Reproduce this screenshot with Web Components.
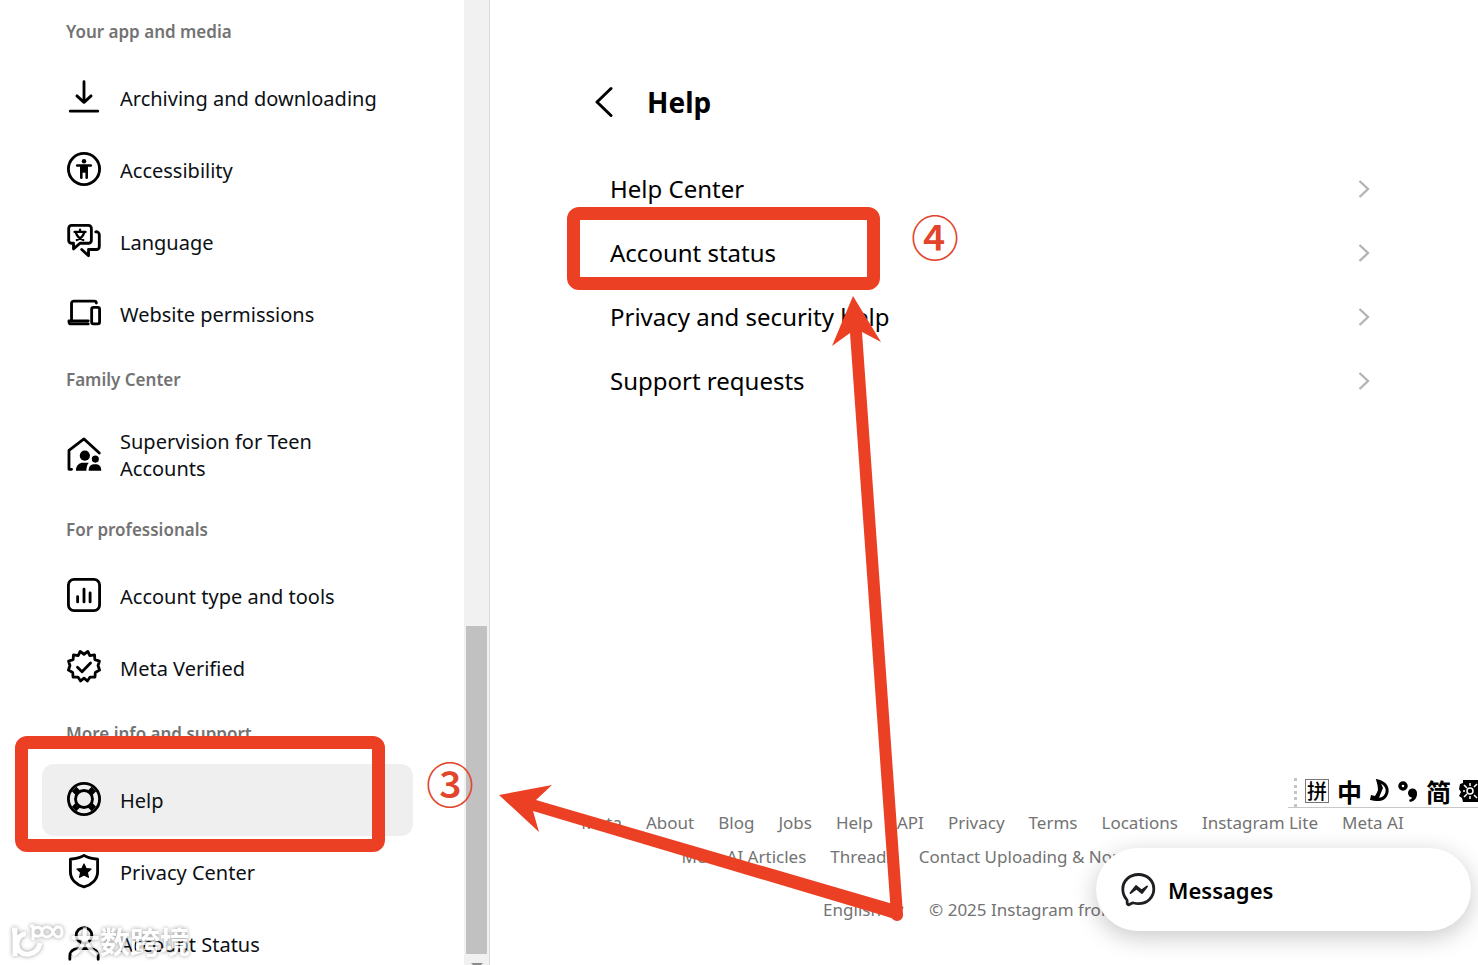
<!DOCTYPE html>
<html lang="en">
<head>
<meta charset="utf-8">
<title>Help</title>
<style>
  body {
    margin: 0;
    background: #fff;
    color: #0c1014;
    font-family: "Noto Sans", "Open Sans", "Noto Sans CJK SC", sans-serif;
  }
</style>
</head>
<body>
<settings-page></settings-page>

<script>
const icons = {
  download: '<path d="M12 1.200v14.200M7 11.200l5 4.600 5-4.600M2.300 22h19.400"/>',
  access: '<circle cx="12" cy="12" r="11"/><circle cx="12" cy="6.600" r="1.600" fill="currentColor" stroke="none"/><path d="M7.200 9.500h9.600M10.100 9.600v8.600M13.900 9.600v8.600" stroke-width="1.800"/><path d="M9.500 9.400h5v5.200h-5z" fill="currentColor" stroke="none"/>',
  language: '<path d="M3.200 1h12a2 2 0 0 1 2 2v8.600a2 2 0 0 1-2 2H9.200l-4.600 4v-4H3.200a2 2 0 0 1-2-2V3a2 2 0 0 1 2-2z"/><path d="M20.300 5.500a2.200 2.200 0 0 1 2.500 2.200v8.300a2 2 0 0 1-2 2h-5.600v4.400l-4.800-4.400"/><path d="M5.300 5.600h7.800M9.200 3.900v1.700M12.200 5.900c-.8 2.700-2.700 4.500-5.300 5.400M6.200 5.900c.8 2.700 2.700 4.500 5.300 5.400" stroke-width="1.600"/>',
  devices: '<path d="M3.200 17.500V5.200A1.600 1.600 0 0 1 4.800 3.600h14.500a1.400 1.400 0 0 1 1.400 1.400M15 17.500H1.400v.6a1.600 1.600 0 0 0 1.600 1.600h12"/><rect x="17.400" y="8" width="5.600" height="11.700" rx="1.300"/>',
  family: '<path d="M3.200 22.800H1.400V9.500L12 1.400l10.800 9.900"/><g fill="currentColor" stroke="none"><circle cx="12.600" cy="13.200" r="3.600"/><circle cx="20" cy="15.600" r="2.500"/><path d="M6.300 23.800c0-3.800 2.400-5.600 5.200-5.600H15.400c-1.200 1.400-1.700 3.200-1.700 5.600zM15.300 23.800c0-3.200 1.700-4.500 4.500-4.500s4.400 1.300 4.400 4.500z"/></g>',
  chart: '<rect x="1" y="1" width="22" height="22" rx="4"/><path d="M7.500 13.200v3.700M12 7.800v9.100M16.300 10.500v6.400"/>',
  verified: '<path d="M12 3 14.700 1l1.400 3 3.300-.6.300 3.400 3.200 1-1 3.200 1.100 3.200-3 1.600-.300 3.400-3.400-.100-1.900 2.800-2.400-2-2.400 2-1.900-2.800-3.400.100-.300-3.400-3-1.600 1.100-3.200-1-3.200 3.200-1 .3-3.400 3.300.6 1.400-3z"/><path d="m7.400 12.200 3.200 3.100 6-6.100"/>',
  help: '<circle cx="12" cy="12" r="11"/><circle cx="12" cy="12" r="6"/><path d="m5 5 2.800 2.800M19 5l-2.800 2.800M5 19l2.800-2.800M19 19l-2.800-2.800" stroke-width="4.500" stroke-linecap="butt"/>',
  shield: '<path d="M12 1c2.900 1.900 6 2.400 9.600 2.700v9c0 5.200-4.200 9-9.600 10.500-5.400-1.500-9.600-5.300-9.600-10.500v-9C6 3.400 9.100 2.900 12 1z"/><path d="m12 7 1.500 3.200 3.500.4-2.600 2.400.7 3.500-3.100-1.700-3.100 1.700.7-3.500L7 10.600l3.500-.4z" fill="currentColor" stroke-width=".8"/>',
  person: '<circle cx="12" cy="6.600" r="5.500"/><path d="M2 23.500v-2.200c0-3 2.300-5.300 5.300-5.300h9.400c3 0 5.300 2.300 5.300 5.300v2.200"/>'
}

class SideItem extends HTMLElement {
  constructor () {
    super()
    this.attachShadow({ mode: 'open' })
  }

  connectedCallback () {
    this.shadowRoot.innerHTML =
    /* html */`
    <style>
      :host {
        display: block;
      }

      a {
        align-items: center;
        border-radius: 12px;
        box-sizing: border-box;
        color: inherit;
        display: flex;
        font-size: 20px;
        gap: 18px;
        line-height: 27px;
        min-height: 72px;
        padding: 18px 24px;
        text-decoration: none;
      }

      :host([active]) a {
        background: #efefef;
      }

      svg {
        color: #000;
        flex: none;
        height: 34px;
        overflow: visible;
        padding: 0 1px 2px;
        width: 34px;
      }

      span {
        max-width: 260px;
      }
    </style>
    <a href="#">
      <svg viewBox="0 0 24 24" fill="none" stroke="currentColor" stroke-width="2" stroke-linecap="round" stroke-linejoin="round" aria-hidden="true">${icons[this.getAttribute('icon')]}</svg>
      <span><slot></slot></span>
    </a>
    `
  }
}
customElements.define('side-item', SideItem)

class SideGroup extends HTMLElement {
  constructor () {
    super()
    this.attachShadow({ mode: 'open' })
  }

  connectedCallback () {
    this.shadowRoot.innerHTML =
    /* html */`
    <style>
      :host {
        display: block;
      }

      h2 {
        color: #737373;
        font-size: 17px;
        font-weight: 600;
        line-height: 60px;
        margin: 0;
        padding: 0 24px;
      }
    </style>
    <h2>${this.getAttribute('heading')}</h2>
    <slot></slot>
    `
  }
}
customElements.define('side-group', SideGroup)

class SideBar extends HTMLElement {
  constructor () {
    super()
    this.attachShadow({ mode: 'open' })
  }

  connectedCallback () {
    this.shadowRoot.innerHTML =
    /* html */`
    <style>
      :host {
        border-right: 1px solid #dbdbdb;
        box-sizing: border-box;
        display: flex;
        flex: none;
        overflow: hidden;
        width: 490px;
      }

      nav {
        flex: 1;
        padding: 2px 51px 0 42px;
      }

      .track {
        background: #f1f1f1;
        box-sizing: border-box;
        display: flex;
        flex-direction: column;
        justify-content: flex-end;
        padding: 0 2px;
        width: 25px;
      }

      .thumb {
        background: #c1c1c1;
        height: 34%;
      }

      .arrow {
        align-self: center;
        border: 6px solid transparent;
        border-bottom: 0;
        border-top-color: #8b8b8b;
        margin: 9px 0 -4px;
      }
    </style>
    <nav>
      <side-group heading="Your app and media">
        <side-item icon="download">Archiving and downloading</side-item>
        <side-item icon="access">Accessibility</side-item>
        <side-item icon="language">Language</side-item>
        <side-item icon="devices">Website permissions</side-item>
      </side-group>
      <side-group heading="Family Center">
        <side-item icon="family">Supervision for Teen Accounts</side-item>
      </side-group>
      <side-group heading="For professionals">
        <side-item icon="chart">Account type and tools</side-item>
        <side-item icon="verified">Meta Verified</side-item>
      </side-group>
      <side-group heading="More info and support">
        <side-item icon="help" active>Help</side-item>
        <side-item icon="shield">Privacy Center</side-item>
        <side-item icon="person">Account Status</side-item>
      </side-group>
    </nav>
    <div class="track"><div class="thumb"></div><div class="arrow"></div></div>
    `
  }
}
customElements.define('side-bar', SideBar)

class HelpRow extends HTMLElement {
  constructor () {
    super()
    this.attachShadow({ mode: 'open' })
  }

  connectedCallback () {
    this.shadowRoot.innerHTML =
    /* html */`
    <style>
      :host {
        display: block;
      }

      a {
        align-items: center;
        color: #000;
        display: flex;
        font-size: 24px;
        height: 64px;
        justify-content: space-between;
        text-decoration: none;
      }

      svg {
        height: 20px;
        width: 12px;
      }
    </style>
    <a href="#">
      <slot></slot>
      <svg viewBox="0 0 12 20" fill="none" stroke="#b4b4b4" stroke-width="2.400" aria-hidden="true"><path d="m1.500 3 8.500 8-8.500 8"/></svg>
    </a>
    `
  }
}
customElements.define('help-row', HelpRow)

class HelpPanel extends HTMLElement {
  constructor () {
    super()
    this.attachShadow({ mode: 'open' })
  }

  connectedCallback () {
    this.shadowRoot.innerHTML =
    /* html */`
    <style>
      :host {
        display: block;
        padding: 78px 108px 0 105px;
      }

      header {
        align-items: center;
        display: flex;
        gap: 34px;
        height: 48px;
      }

      button {
        background: none;
        border: none;
        display: flex;
        padding: 0;
      }

      button svg {
        height: 32px;
        width: 18px;
      }

      h1 {
        color: #000;
        font-size: 28px;
        font-weight: 700;
        line-height: 40px;
        margin: 0;
      }

      .rows {
        padding: 30px 0 0 15px;
      }
    </style>
    <header>
      <button type="button" aria-label="Back">
        <svg viewBox="0 0 18 32" fill="none" stroke="#000" stroke-width="3" stroke-linecap="round" stroke-linejoin="round"><path d="M16 2.500 2 16l14 13.500"/></svg>
      </button>
      <h1>Help</h1>
    </header>
    <div class="rows">
      <help-row>Help Center</help-row>
      <help-row>Account status</help-row>
      <help-row>Privacy and security help</help-row>
      <help-row>Support requests</help-row>
    </div>
    `
  }
}
customElements.define('help-panel', HelpPanel)

class PageFooter extends HTMLElement {
  constructor () {
    super()
    this.attachShadow({ mode: 'open' })
  }

  links (names) {
    return names.map(name => `<a href="#">${name}</a>`).join('')
  }

  connectedCallback () {
    this.shadowRoot.innerHTML =
    /* html */`
    <style>
      :host {
        color: #737373;
        display: block;
        font-size: 17px;
        line-height: 24px;
        padding: 0 68px 43px 85px;
      }

      .line {
        display: flex;
        gap: 24px;
        justify-content: center;
        margin-bottom: 10px;
        white-space: nowrap;
      }

      .legal {
        margin: 29px 0 0;
      }

      a {
        color: inherit;
        text-decoration: none;
      }

      label {
        align-items: center;
        display: flex;
        gap: 8px;
      }

      select {
        appearance: none;
        background: none;
        border: none;
        color: inherit;
        font: inherit;
        padding: 0;
      }

      label svg {
        height: 16px;
        width: 16px;
      }
    </style>
    <div class="line">${this.links(['Meta', 'About', 'Blog', 'Jobs', 'Help', 'API', 'Privacy', 'Terms', 'Locations', 'Instagram Lite', 'Meta AI'])}</div>
    <div class="line">${this.links(['Meta AI Articles', 'Threads', 'Contact Uploading &amp; Non-Users', 'Meta Verified'])}</div>
    <div class="line legal">
      <label>
        <select aria-label="Language"><option>English</option></select>
        <svg viewBox="0 0 16 16" fill="none" stroke="currentColor" stroke-width="2" aria-hidden="true"><path d="m2 5 6 6 6-6"/></svg>
      </label>
      <span>© 2025 Instagram from Meta</span>
    </div>
    `
  }
}
customElements.define('page-footer', PageFooter)

class MessagesPill extends HTMLElement {
  constructor () {
    super()
    this.attachShadow({ mode: 'open' })
  }

  connectedCallback () {
    this.shadowRoot.innerHTML =
    /* html */`
    <style>
      :host {
        bottom: 34px;
        position: absolute;
        right: 7px;
      }

      button {
        align-items: center;
        background: #fff;
        border: none;
        border-radius: 42px;
        box-shadow: 0 6px 24px rgba(0, 0, 0, .22);
        color: #000;
        display: flex;
        font: 600 22px/30px "Noto Sans", "Open Sans", sans-serif;
        gap: 12px;
        height: 83px;
        padding: 0 24px;
        width: 375px;
      }

      svg {
        height: 36px;
        width: 36px;
      }
    </style>
    <button type="button">
      <svg viewBox="0 0 36 36" fill="none" stroke="#1c1e21" stroke-width="2.800" stroke-linejoin="round" aria-hidden="true">
        <path d="M18.500 2.500c8.800 0 15.300 6.200 15.300 14.500s-6.500 14.600-15.300 14.600c-1.600 0-3.100-.2-4.500-.6-.6-.2-1.200-.1-1.700.1l-3 1.500c-1 .4-2-.2-2.100-1.200l-.1-2.800c0-.7-.3-1.200-.8-1.600-2.200-2.600-3.500-6.100-3.500-10C2.800 8.700 9.700 2.500 18.500 2.500z"/>
        <path d="m10.500 21 5.500-7 5.500 4.500 5.500-4-5 6.500-5.500-4.500z" fill="#1c1e21" stroke-width="2"/>
      </svg>
      <span>Messages</span>
    </button>
    `
  }
}
customElements.define('messages-pill', MessagesPill)

class ImeBar extends HTMLElement {
  constructor () {
    super()
    this.attachShadow({ mode: 'open' })
  }

  connectedCallback () {
    this.shadowRoot.innerHTML =
    /* html */`
    <style>
      :host {
        align-items: center;
        background: #fff;
        border-bottom: 1px solid #c8c8c8;
        bottom: 157px;
        color: #000;
        display: flex;
        font: 700 25px/30px "Noto Sans CJK SC", sans-serif;
        gap: 8px;
        height: 33px;
        overflow: hidden;
        padding-left: 6px;
        position: absolute;
        right: -1px;
      }

      .grip {
        align-self: stretch;
        border-left: 3px dotted #c4c4c4;
        margin-top: 4px;
      }

      .mode {
        border: 1px solid #777;
        font-size: 20px;
        font-weight: 500;
        line-height: 22px;
        padding: 0 1px;
      }

      svg {
        height: 24px;
        width: 20px;
      }
    </style>
    <span class="grip"></span>
    <span class="mode">拼</span>
    <span>中</span>
    <svg viewBox="0 0 20 24" aria-hidden="true"><path d="M8 2c8 2 11 8 8 14-2 4-7 5-12 4 5-3 7-9 4-18z" fill="none" stroke="#000" stroke-width="3"/><path d="M7 2h3l3 7-3 7-2 6-8-1 1-5 4 1 4-7z"/></svg>
    <svg viewBox="0 0 20 24" aria-hidden="true"><circle cx="5" cy="7" r="3" fill="none" stroke="#000" stroke-width="3.500"/><circle cx="14.500" cy="14" r="4.500"/><path d="M19 14c0 5-2 8-7 9l-1-2c3-1 3-2 3-4z"/></svg>
    <span>简</span>
    <svg viewBox="0 0 20 24" aria-hidden="true"><path d="M4 1h16v22H4l-1-4-3-2 2-4-2-3 1-5 3-1z"/><g fill="none" stroke="#fff" stroke-width="1.500"><circle cx="11" cy="12" r="3"/><path d="m5 6 3 3M5 18l3-3M4 12h2M11 4v3M11 17v3M15 8l3-3M15 16l3 3"/></g></svg>
    `
  }
}
customElements.define('ime-bar', ImeBar)

class MarkUp extends HTMLElement {
  constructor () {
    super()
    this.attachShadow({ mode: 'open' })
  }

  connectedCallback () {
    this.shadowRoot.innerHTML =
    /* html */`
    <style>
      :host {
        color: #e2452c;
        inset: 0;
        overflow: hidden;
        pointer-events: none;
        position: absolute;
      }

      .box {
        border: 13px solid #ec4025;
        border-radius: 12px;
        box-sizing: border-box;
        position: absolute;
      }

      .help {
        height: 116px;
        left: 15px;
        top: 736px;
        width: 370px;
      }

      .status {
        height: 83px;
        left: 567px;
        top: 207px;
        width: 313px;
      }

      .step {
        font: 500 48px/48px "Noto Sans CJK SC", sans-serif;
        position: absolute;
      }

      .three {
        left: 426px;
        top: 758px;
      }

      .four {
        left: 911px;
        top: 211px;
      }

      .arrows {
        height: 965px;
        left: 0;
        position: absolute;
        top: 0;
        width: 1478px;
      }

      .brand {
        align-items: center;
        bottom: 6px;
        color: #fff;
        display: flex;
        filter: drop-shadow(0 0 2px rgba(0, 0, 0, .5));
        font: 700 30px/36px "Noto Sans CJK SC", sans-serif;
        gap: 6px;
        left: 10px;
        opacity: .8;
        position: absolute;
      }

      .brand svg {
        height: 38px;
        width: 54px;
      }
    </style>
    <div class="box help"></div>
    <div class="box status"></div>
    <span class="step three">③</span>
    <span class="step four">④</span>
    <svg class="arrows" viewBox="0 0 1478 965" fill="#ec4025" aria-hidden="true">
      <path d="m853 296 28 46-19-10 41 582a6 6 0 0 1-6 7 6 6 0 0 1-6-6L850 333l-18 13z"/>
      <path d="m499 795 53-10-16 15 357 104 4 16-12-4-352-105 6 21z"/>
    </svg>
    <div class="brand">
      <svg viewBox="0 0 54 38" fill="none" stroke="#fff" aria-hidden="true">
        <path d="M2 9h3v26M16 13c-6 0-9 5-9 10 0 7 5 11 12 10 6-1 10-5 11-11" stroke-width="5"/>
        <path d="M20 5h3v14M23 10c1-5 8-5 9 0 1 6-7 7-9 2M43 11c-3-7-11-6-11 0s8 7 11 0 9-6 9 0-6 7-9 0z" stroke-width="3"/>
      </svg>
      <span>大数跨境</span>
    </div>
    `
  }
}
customElements.define('mark-up', MarkUp)

class SettingsPage extends HTMLElement {
  constructor () {
    super()
    this.attachShadow({ mode: 'open' })
  }

  connectedCallback () {
    this.shadowRoot.innerHTML =
    /* html */`
    <style>
      :host {
        display: flex;
        height: 100vh;
        overflow: hidden;
        position: relative;
      }

      main {
        display: flex;
        flex: 1;
        flex-direction: column;
        justify-content: space-between;
        min-width: 0;
      }
    </style>
    <side-bar></side-bar>
    <main>
      <help-panel></help-panel>
      <page-footer></page-footer>
    </main>
    <ime-bar></ime-bar>
    <messages-pill></messages-pill>
    <mark-up></mark-up>
    `
  }
}
customElements.define('settings-page', SettingsPage)
</script>
</body>
</html>
